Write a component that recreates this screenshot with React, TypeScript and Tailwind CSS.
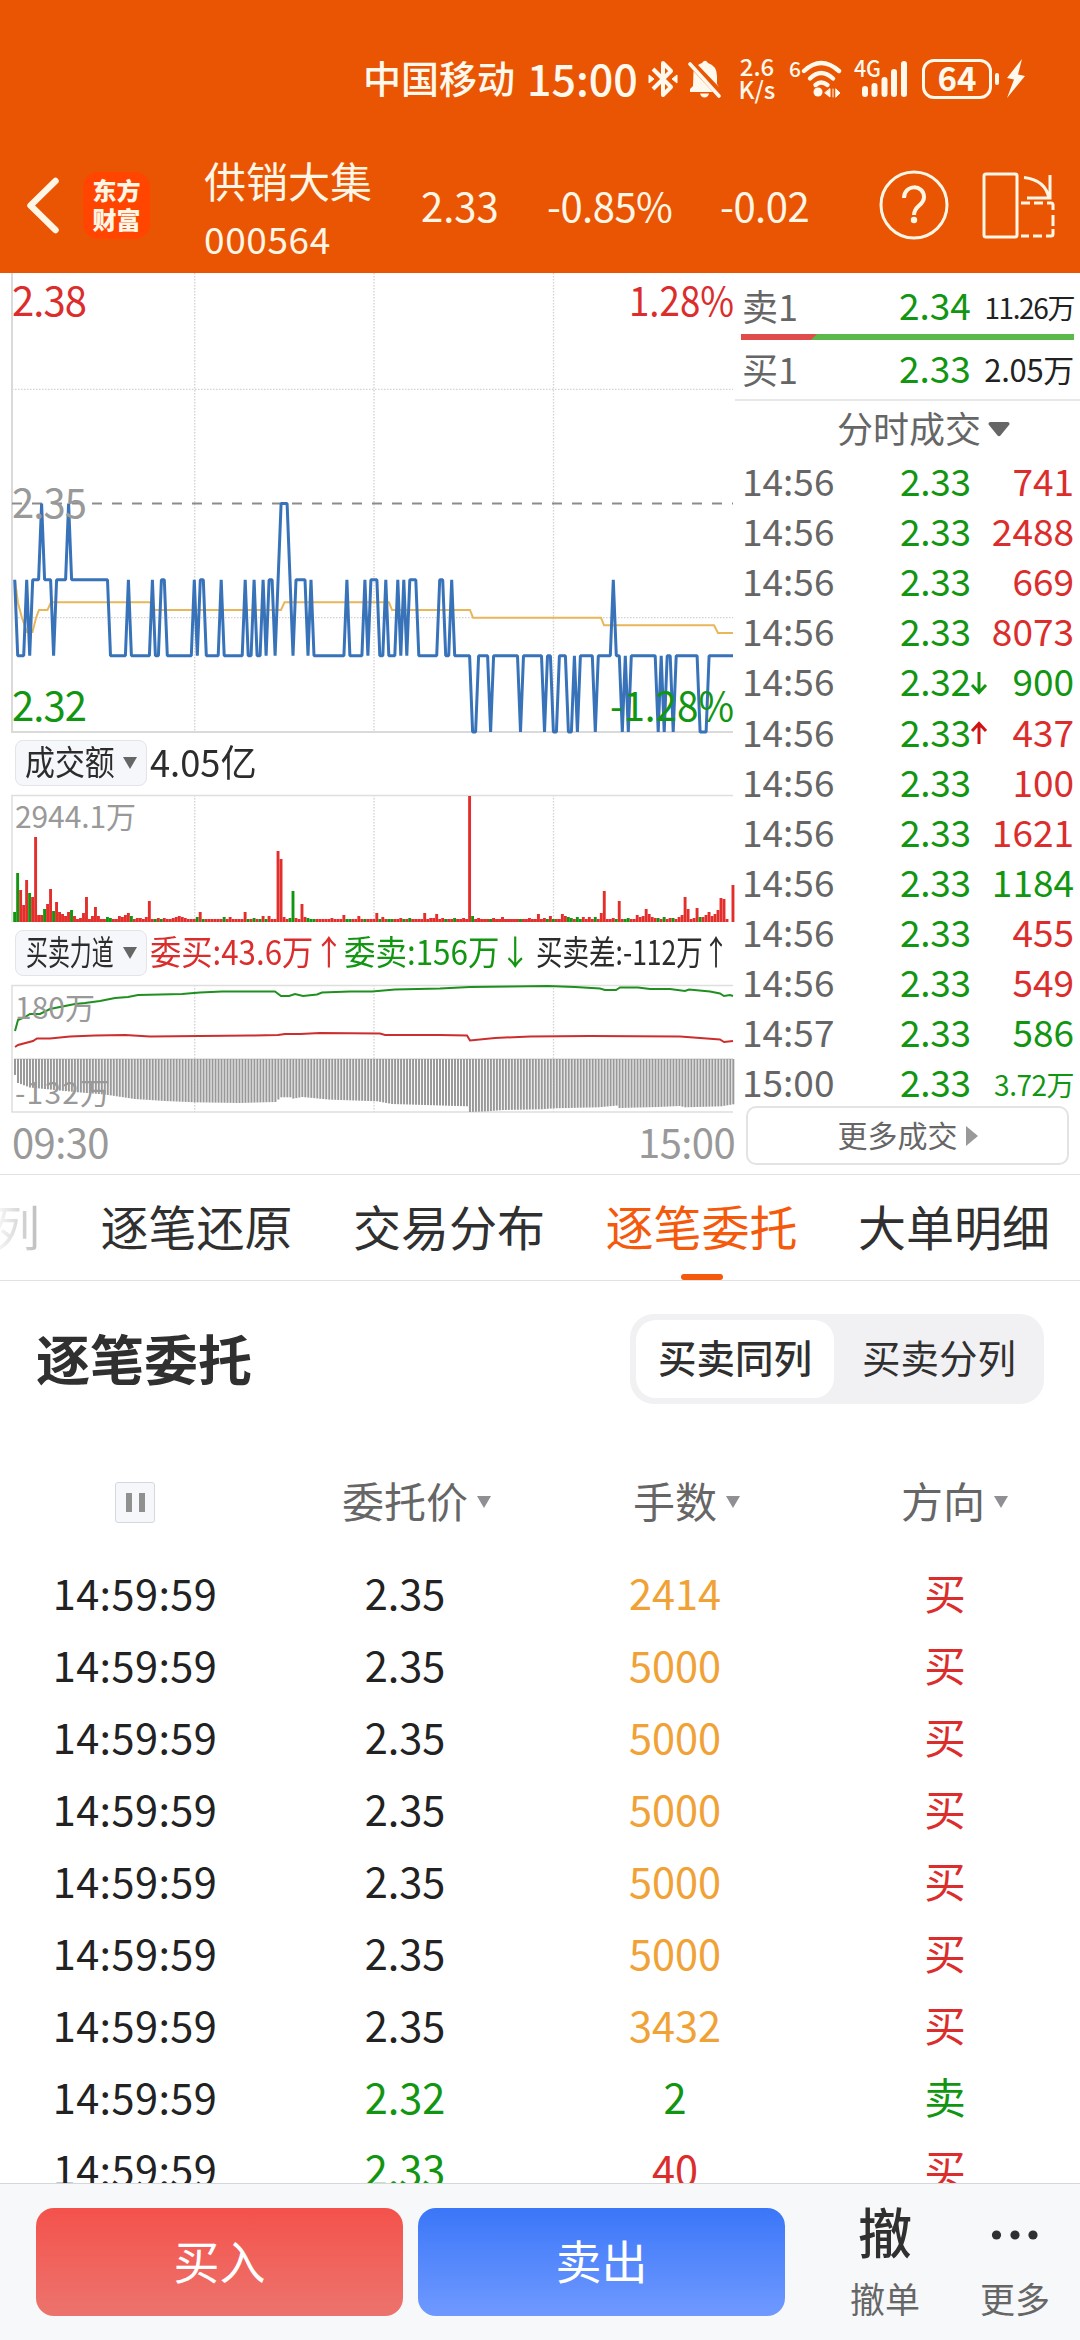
import React from 'react';

const FONT = "font-['Noto_Sans_CJK_SC','Noto_Sans',sans-serif]";

const RED = '#dc2d2d';
const GREEN = '#129612';
const GRAY = '#999999';

// Minute index -> x inside the chart area
const minuteX = (i: number) => 14.7 + i * 2.993;

/* ---------- Chart data ---------- */

// Corners of the price line, "minute + level" (T 2.35, A 2.34, B 2.33, L 2.32)
const PRICE_POINTS =
  '0A 1B 3B 4A 5B 6A 8A 9T 10A 12A 13B 14A 17A 18T 19A 31A 32B 37B 38A 39B 45B 46A 47B 48B 49A 50A 51B 59B 60A 61B 62A 63A 64B 68B 69A 70B 76B 77A 78B 79B 80A 81B 82B 83A 84B 85A 86A 87B 89T 91T 93B 94A 97A 98B 99A 100B 110B 111A 112B 116B 117A 118B 119A 121A 122B 123B 124A 125B 127B 128A 129B 130A 131B 132A 134A 135B 141B 142A 143A 144B 145B 146A 147B 152B 153L 154L 155B 158B 159L 160B 168B 169L 170B 176B 177L 178B 179B 180L 181L 182B 184B 185L 186L 187B 188L 189B 193B 194L 195B 199B 200A 201B 202B 203L 204B 205L 206B 214B 215L 216B 217L 218B 219B 220L 221B 228B 229L 231L 232B 240B';

const LEVEL_Y: Record<string, number> = { T: 230.5, A: 306.7, B: 382.7, L: 459 };

const pricePath = PRICE_POINTS.split(' ')
  .map((p) => `${minuteX(parseInt(p, 10)).toFixed(1)},${LEVEL_Y[p.slice(-1)]}`)
  .join(' ');

// Turnover bars that rise above the base height, g = falling minute
const VOLUME_BARS =
  '0:10g 1:49g 2:32 3:17 4:42 5:29g 6:25 7:85 8:7 9:7 10:13g 11:18 12:33 13:11g 14:20 15:10 16:8 17:6 18:10 19:12g 20:6 22:4 23:9 24:25 26:6 27:15 28:6 31:5g 32:4g 35:6 36:5 37:7 38:9 39:6g 41:4 42:4 44:5 45:21 47:3g 48:4 49:3g 50:4 53:4 54:5 55:6 56:5 57:4 61:5g 62:10 63:3g 70:5g 72:5 77:10 78:3g 80:4g 82:3g 83:6 84:3g 85:6 88:71 89:63 90:5 92:4g 93:31g 94:4 96:18 97:5 98:4g 99:3g 100:3g 106:4 110:7 111:3g 112:3g 115:6 117:3g 121:9 122:3g 123:5 125:3g 126:3g 129:4 130:3g 132:4g 137:9 139:4 140:4 141:8 143:4 144:3g 147:4g 150:4 152:126 153:6g 155:4 159:3g 160:4 163:5 169:3g 172:4 175:8 177:4 178:3g 179:6 180:3g 183:8 184:6 185:5g 186:4g 188:5g 189:3g 190:5 192:5 194:5g 196:9 197:31 200:4 201:3g 202:21 204:3g 205:4g 208:7 209:5 210:6 211:13 212:8 213:5 214:4 215:4g 217:5g 219:4 220:4g 222:5 223:7 224:25 225:13 227:4 228:14 229:5g 230:5 231:7 232:10 233:6 234:8 235:12 236:24 237:23 240:37';

const volumeBars = Array.from({ length: 241 }, (_, i) => ({ i, h: i === 239 ? 0 : 3, color: '#e22f2c' }));
VOLUME_BARS.split(' ').forEach((entry) => {
  const [i, h] = entry.split(':');
  volumeBars[Number(i)] = { i: Number(i), h: parseInt(h, 10), color: h.endsWith('g') ? GREEN : '#e22f2c' };
});

// Buy/sell difference, [minute, bar length]
const DIFF_STOPS = [
  [0, 16], [1, 24], [5, 28.5], [20, 33], [30, 35.5], [40, 40], [50, 42], [60, 43.3], [75, 44], [87, 43], [88, 40.5],
  [89, 38.3], [92, 38.3], [93, 39.6], [96, 38], [105, 40.6], [121, 42.3], [126, 45], [151, 47.3], [152, 53], [158, 52.3],
  [163, 51], [176, 50.3], [180, 49.3], [195, 48.3], [201, 46.6], [202, 49], [215, 48], [222, 47], [224, 48.3], [236, 47.3], [240, 45.3],
];

const diffAt = (i: number) => {
  const k = Math.max(1, DIFF_STOPS.findIndex(([m]) => m >= i));
  const [m0, v0] = DIFF_STOPS[k - 1];
  const [m1, v1] = DIFF_STOPS[k];
  return v0 + ((v1 - v0) * (i - m0)) / (m1 - m0);
};

const GRID_X = [194.7, 374, 553.5];

/* ---------- Table data ---------- */

type Tick = { time: string; price: string; amount: string; sell?: boolean; move?: 'up' | 'down' };

const TICKS: Tick[] = [
  { time: '14:56', price: '2.33', amount: '741' },
  { time: '14:56', price: '2.33', amount: '2488' },
  { time: '14:56', price: '2.33', amount: '669' },
  { time: '14:56', price: '2.33', amount: '8073' },
  { time: '14:56', price: '2.32', amount: '900', sell: true, move: 'down' },
  { time: '14:56', price: '2.33', amount: '437', move: 'up' },
  { time: '14:56', price: '2.33', amount: '100' },
  { time: '14:56', price: '2.33', amount: '1621' },
  { time: '14:56', price: '2.33', amount: '1184', sell: true },
  { time: '14:56', price: '2.33', amount: '455' },
  { time: '14:56', price: '2.33', amount: '549' },
  { time: '14:57', price: '2.33', amount: '586', sell: true },
  { time: '15:00', price: '2.33', amount: '3.72万', sell: true },
];

const ORDERS = [
  { price: '2.35', lots: '2414', side: '买' },
  { price: '2.35', lots: '5000', side: '买' },
  { price: '2.35', lots: '5000', side: '买' },
  { price: '2.35', lots: '5000', side: '买' },
  { price: '2.35', lots: '5000', side: '买' },
  { price: '2.35', lots: '5000', side: '买' },
  { price: '2.35', lots: '3432', side: '买' },
  { price: '2.32', lots: '2', side: '卖' },
  { price: '2.33', lots: '40', side: '买' },
];

/* ---------- Header ---------- */

const StatusBar = () => (
  <div className="h-[140px] pt-[55px] pl-[363px] flex items-start text-[#fff8ec] font-medium">
    <span className="text-[38px] leading-[44px] w-[164px] whitespace-nowrap">中国移动</span>
    <span className="text-[43px] leading-[46px] w-[121px] -mt-[1px]">15:00</span>

    <svg width="30" height="40" viewBox="0 0 30 40" className="mt-[4px]" fill="none" stroke="currentColor" strokeWidth="4" strokeLinejoin="round">
      <path d="M5 10 L23 28 L15 36 V4 L23 12 L5 30" />
      <path d="M1 16 l5 4 l-5 4 Z M29 16 l-5 4 l5 4 Z" fill="currentColor" strokeWidth="1" />
    </svg>
    <svg width="34" height="40" viewBox="0 0 34 40" className="mt-[4px] ml-[10px]" fill="currentColor">
      <path d="M10 6 Q12.500 4.500 14 4 Q17 -0.500 20 4 Q29 7 29 17 V25 L31 28 Z" />
      <path d="M5.500 12 L25 33 H2 V30 L5 27 Z" />
      <path d="M12 34.500 H21 Q20 38.500 16.500 38.500 Q13 38.500 12 34.500 Z" />
      <path d="M2 5 L31 37" stroke="currentColor" strokeWidth="3.6" strokeLinecap="round" />
    </svg>

    <div className="w-[42px] ml-[14px] -mt-[1px] text-center text-[24px] leading-[23px]">
      <div>2.6</div>
      <div>K/s</div>
    </div>

    <span className="ml-[11px] w-[12px] text-[21px] leading-[22px] mt-[2px]">6</span>
    <svg width="42" height="40" viewBox="0 0 42 40" className="mt-[4px]" fill="none" stroke="currentColor" strokeWidth="4.4" strokeLinecap="round">
      <path d="M3 12 Q20 -4 38 12" />
      <path d="M9 19.500 Q20 8.500 32 19.500" />
      <path d="M14.500 26 Q20 21 26.500 26" />
      <circle cx="17" cy="33" r="4.500" fill="currentColor" stroke="none" />
      <path d="M29 30 V38 L24 34 Z M32 30 V38 M35 30 L39 34 L35 38 Z" fill="currentColor" strokeWidth="1" />
    </svg>

    <svg width="54" height="42" viewBox="0 0 54 42" className="ml-[11px] mt-[3px]" stroke="currentColor" strokeWidth="6" strokeLinecap="round">
      <text x="0" y="19" fontSize="23" fill="currentColor" stroke="none" textLength="27" lengthAdjust="spacingAndGlyphs">4G</text>
      <path d="M11 31 V36 M20.500 28 V36 M30.500 22 V36 M40 14 V36 M50 6 V36" />
    </svg>

    <div className="ml-[14px] mt-[4px] w-[70px] h-[40px] rounded-[12px] border-[3px] border-current text-[33px] leading-[30px] text-center font-bold">64</div>
    <div className="ml-[3px] mt-[18px] w-[4px] h-[12px] rounded-full bg-current" />
    <svg width="22" height="40" viewBox="0 0 22 40" className="ml-[6px] mt-[4px]" fill="currentColor">
      <path d="M17 0 L2 19 L9 20.500 L2 39 L20 17 L13 15.500 Z" />
    </svg>
  </div>
);

const TitleBar = () => (
  <div className="h-[133px] flex items-start text-[#fff6e6]">
    <svg width="83" height="133" viewBox="0 0 83 133" fill="none" stroke="currentColor" strokeWidth="6.500" strokeLinecap="round" strokeLinejoin="round">
      <path d="M55.500 41 L30.500 65.500 L55.500 90" />
    </svg>
    <div className="mt-[32px] w-[67px] h-[67px] rounded-[15px] bg-[#ff4500] flex flex-col items-center justify-center text-[24px] leading-[29px] font-black pb-[3px]">
      <span>东方</span>
      <span>财富</span>
    </div>
    <div className="ml-[54px] w-[217px] mt-[13px]">
      <div className="text-[42px] leading-[54px] whitespace-nowrap">供销大集</div>
      <div className="text-[37px] leading-[62px] tracking-[0.600px]">000564</div>
    </div>
    <div className="mt-[37px] flex text-[40px] leading-[56px] whitespace-nowrap tracking-[-0.500px]">
      <span className="w-[126px] tracking-normal">2.33</span>
      <span className="w-[173px]">-0.85%</span>
      <span className="w-[159px]">-0.02</span>
    </div>
    <svg width="70" height="70" viewBox="0 0 70 70" className="mt-[30px]" fill="none" stroke="currentColor" strokeWidth="3">
      <circle cx="35" cy="35" r="33" />
      <path d="M25 28 C25 14 45 14 45 27 C45 36 35 35 35 45" strokeWidth="4" />
      <circle cx="35" cy="50" r="3.200" fill="currentColor" stroke="none" />
    </svg>
    <svg width="74" height="70" viewBox="0 0 74 70" className="ml-[32px] mt-[31px]" fill="none" stroke="currentColor" strokeWidth="3">
      <rect x="3" y="3" width="33" height="63" rx="2" />
      <path d="M43 6.500 Q65 9 68 28 M69 4 V27 H46" />
      <path d="M40 32 H49 M53 32 H62 M66 32 H70 Q72 32 72 34 V39 M72 44 V55 M72 58 V63 Q72 65 70 65 H65 M61 65 H52 M48 65 H40" />
    </svg>
  </div>
);

/* ---------- Charts ---------- */

const PriceChart = () => (
  <svg width="735" height="462" viewBox="0 0 735 462" className="block text-[40px]">
    <g fill="none" strokeWidth="1.300" stroke="#d2d2d2" strokeDasharray="1.500 1.500">
      {GRID_X.map((x) => <path key={x} d={`M${x} 0 V459`} />)}
      <path d="M12 116.300 H733 M12 344.700 H733" />
    </g>
    <path d="M12 0 V459 H733" fill="none" stroke="#dadada" strokeWidth="2" />
    <path d="M12 230.500 H733" stroke="#8c8c8c" strokeWidth="2" strokeDasharray="10 10" />
    <polyline
      fill="none"
      stroke="#e8b75a"
      strokeWidth="2"
      points="15,307 18,330 22,345 27,359 32.500,359 36,345 39,337 47.500,337 51,329.300 150,329.300 155,337 281,337 284.500,329.300 389,329.300 392,337 470,337 473,344.700 601,344.700 604,352.300 714,352.300 718,360 733,360"
    />
    <polyline fill="none" stroke="#3873b9" strokeWidth="3" strokeLinejoin="bevel" points={pricePath} />
    <text x="12" y="43" fill={RED} textLength="75">2.38</text>
    <text x="12" y="245" fill={GRAY} textLength="75">2.35</text>
    <text x="12" y="448" fill={GREEN} textLength="75">2.32</text>
    <text x="629" y="43" fill={RED} textLength="105" lengthAdjust="spacingAndGlyphs">1.28%</text>
    <text x="610" y="448" fill={GREEN} textLength="124" lengthAdjust="spacingAndGlyphs">-1.28%</text>
  </svg>
);

const VolumeChart = () => (
  <svg width="735" height="130" viewBox="0 0 735 130" className="block">
    {GRID_X.map((x) => <path key={x} d={`M${x} 1 V128`} stroke="#d2d2d2" strokeWidth="1.300" strokeDasharray="1.500 1.500" />)}
    <path d="M12 128 V1.500 H733" fill="none" stroke="#dedede" strokeWidth="1.500" />
    {volumeBars.map(({ i, h, color }) => (
      <rect key={i} x={minuteX(i) - 1.5} y={128 - h} width="2.900" height={h} fill={color} />
    ))}
    <text x="15" y="34" fontSize="30" fill={GRAY} textLength="121">2944.1万</text>
  </svg>
);

const ForceChart = () => (
  <svg width="735" height="130" viewBox="0 0 735 130" className="block">
    {GRID_X.map((x) => <path key={x} d={`M${x} 1 V128`} stroke="#d2d2d2" strokeWidth="1.300" strokeDasharray="1.500 1.500" />)}
    <path d="M733 1.500 H12 V128 H733" fill="none" stroke="#dedede" strokeWidth="1.500" />
    <path d="M14 75 H733" stroke="#c9c9c9" strokeWidth="1" />
    {volumeBars.map(({ i }) => (
      <rect key={i} x={minuteX(i) - 0.7} y="75" width="2" height={diffAt(i)} fill="#999999" />
    ))}
    <polyline
      fill="none"
      stroke="#1f8f1f"
      strokeWidth="2"
      points="15,47 18,36 25,33 30,30 40,30 50,25 75,20 85,19 100,17 115,14 128,13 138,11 160,10.500 182,10 200,8.500 222,7.500 275,7.500 281,12 289,12 295,10 303,12 317,10.500 322,8.500 350,7.500 372,7.500 395,5.500 440,4.500 470,3 510,2.500 548,2 575,3 600,4.500 605,6 616,6 620,3.500 638,3.500 650,5 670,5 685,7 689,5.500 710,7.500 720,9.500 724,12 730,11 733,12"
    />
    <polyline
      fill="none"
      stroke="#cc2e2e"
      strokeWidth="2"
      points="15,63 18,61 33,57 37,54.500 50,54.500 70,52.500 95,51.500 125,51 150,52.500 200,52 250,51.500 278,51 285,50 300,50 320,49 380,49.500 385,51 440,51 467,51.500 470,56.500 495,54 530,52.500 590,52 680,52.500 720,55.500 724,58 733,57"
    />
    <text x="15" y="34.500" fontSize="30" fill={GRAY} textLength="80">180万</text>
    <text x="15" y="120" fontSize="30" fill={GRAY} textLength="95">-132万</text>
  </svg>
);

const CaretDown = ({ className }: { className?: string }) => (
  <svg viewBox="0 0 14 12" className={className} fill="currentColor">
    <path d="M0 0 H14 L7 12 Z" />
  </svg>
);

const Charts = () => (
  <div className="w-[735px] shrink-0 text-[#2c2c2c]">
    <PriceChart />

    <div className="h-[59px] pt-[5px] pl-[15px] flex">
      <button className="w-[132px] h-[46px] pl-[9px] rounded-[8px] border border-[#e3e4e8] bg-[#f6f7fa] flex items-center">
        <span className="w-[98px] text-left whitespace-nowrap text-[34px] leading-[40px] pb-[4px] origin-left scale-x-[0.880]">成交额</span>
        <CaretDown className="w-[14px] h-[12px] text-[#666]" />
      </button>
      <span className="ml-[3px] text-[37px] leading-[42px] whitespace-nowrap origin-left scale-x-[0.980]">4.05亿</span>
    </div>

    <VolumeChart />

    <div className="h-[60px] pt-[6px] pl-[15px] flex text-[34px] leading-[42px] whitespace-nowrap">
      <button className="w-[132px] h-[46px] pl-[10px] rounded-[8px] border border-[#e3e4e8] bg-[#f6f7fa] flex items-center">
        <span className="w-[97px] text-left leading-[40px] pb-[4px] origin-left scale-x-[0.645]">买卖力道</span>
        <CaretDown className="w-[14px] h-[12px] text-[#666]" />
      </button>
      <span className="w-[194px] ml-[3px] text-[#dc2d2d] origin-left scale-x-[0.920]">委买:43.6万↑</span>
      <span className="w-[192px] text-[#129612] origin-left scale-x-[0.925]">委卖:156万↓</span>
      <span className="w-[192px] origin-left scale-x-[0.780]">买卖差:-112万↑</span>
    </div>

    <ForceChart />

    <div className="h-[60px] pl-[12px] flex justify-between text-[40px] leading-[54px] tracking-[-0.600px] text-[#999]">
      <span>09:30</span>
      <span>15:00</span>
    </div>
  </div>
);

/* ---------- Quote column ---------- */

const MoveArrow = ({ up }: { up: boolean }) => (
  <svg width="18" height="26" viewBox="0 0 18 26" fill="none" stroke={up ? '#d01212' : GREEN} strokeWidth="3" className="mt-[4px]">
    <path d={up ? 'M9 24 V3 M2 11 L9 3.500 L16 11' : 'M9 2 V23 M2 15 L9 22.500 L16 15'} />
  </svg>
);

const Quotes = () => (
  <div className="flex-1 text-[37px]">
    <div className="h-[61px] pl-[7px] pr-[6px] flex items-center pt-[2px]">
      <span className="w-[157px] text-[#666] text-[36px]">卖1</span>
      <span className="text-[#129612]">2.34</span>
      <span className="ml-auto text-[28px] pt-[5px] tracking-[-1.400px] text-[#222]">11.26万</span>
    </div>
    <div className="ml-[6px] h-[6px] w-[333px] flex bg-[#5cb84a]">
      <div className="w-[76px] bg-[#e04b4b] [clip-path:polygon(0_0,100%_0,92%_100%,0_100%)]" />
    </div>
    <div className="h-[59px] pl-[7px] pr-[6px] pb-[3px] flex items-center">
      <span className="w-[157px] text-[#666] text-[36px]">买1</span>
      <span className="text-[#129612]">2.33</span>
      <span className="ml-auto text-[31px] pt-[3px] tracking-[-0.300px] text-[#222]">2.05万</span>
    </div>
    <div className="h-[2px] bg-[#e8e8e8]" />

    <div className="h-[57px] pl-[102px] flex items-center text-[36px] text-[#666]">
      <span className="pb-[5px]">分时成交</span>
      <svg width="22" height="15" viewBox="0 0 22 15" className="ml-[7px]" fill="currentColor">
        <path d="M2 0 H20 Q22.500 1 21 3 L12.500 13.500 Q11 15 9.500 13.500 L1 3 Q-0.500 1 2 0 Z" />
      </svg>
    </div>

    {TICKS.map((t, i) => (
      <div key={i} className="h-[50.100px] pl-[7px] pr-[6px] pb-[5px] flex items-center leading-[45px]">
        <span className="w-[158px] text-[#666]">{t.time}</span>
        <span className="w-[70px] text-[#129612] tracking-[-0.300px]">{t.price}</span>
        <span className="w-[18px]">{t.move && <MoveArrow up={t.move === 'up'} />}</span>
        <span className={`ml-auto ${t.sell ? 'text-[#129612]' : 'text-[#dc2d2d]'} ${t.amount.includes('万') ? 'text-[28px] pt-[6px] tracking-[-0.500px]' : ''}`}>
          {t.amount}
        </span>
      </div>
    ))}

    <button className="ml-[11px] mt-[-3px] w-[323px] h-[59px] rounded-[10px] border-2 border-[#e3e3e3] bg-white flex items-center justify-center text-[30px] text-[#666] relative">
      <span className="pb-[3px]">更多成交</span>
      <svg width="12" height="20" viewBox="0 0 12 20" className="ml-[8px]" fill="#999">
        <path d="M0 0 L12 10 L0 20 Z" />
      </svg>
    </button>
  </div>
);

/* ---------- Order list ---------- */

const Tabs = () => (
  <div className="h-[107px] border-y border-[#e2e2e2] flex gap-[60.500px] text-[48px] leading-[100px] whitespace-nowrap text-[#303030] overflow-hidden">
    <span className="-ml-[8px] bg-gradient-to-r from-white to-[#bbb] bg-clip-text text-transparent">列</span>
    <span>逐笔还原</span>
    <span>交易分布</span>
    <span className="relative text-[#f4590c]">
      逐笔委托
      <i className="absolute left-[75px] bottom-0 w-[42px] h-[6px] rounded-full bg-[#f4590c]" />
    </span>
    <span>大单明细</span>
  </div>
);

const HEADERS = ['委托价', '手数', '方向'];

const OrderList = () => (
  <div className="h-[902px] overflow-hidden">
    <div className="h-[168px] pl-[36px] pr-[36px] pt-[33px] flex justify-between">
      <h2 className="text-[54px] leading-[88px] font-bold text-[#303030]">逐笔委托</h2>
      <div className="w-[414px] h-[90px] p-[6px] rounded-[24px] bg-[#f1f1f4] flex text-[38.500px] leading-[73px] text-center text-[#303030]">
        <span className="w-[198px] h-[78px] rounded-[20px] bg-white font-medium">买卖同列</span>
        <span className="flex-1 pl-[6px]">买卖分列</span>
      </div>
    </div>

    <div className="h-[107px] grid grid-cols-4 items-center text-[42px] leading-[60px] text-[#666]">
      <div className="mx-auto w-[40px] h-[41px] rounded-[3px] border border-[#d5d9de] bg-[#f5f7fa] flex items-center justify-center gap-[7px]">
        <i className="w-[6px] h-[19px] bg-[#909090]" />
        <i className="w-[6px] h-[19px] bg-[#909090]" />
      </div>
      {HEADERS.map((h) => (
        <div key={h} className="flex justify-center last:pr-[4px]">
          <span className="relative pb-[6px]">
            {h}
            <CaretDown className="absolute left-full ml-[7px] top-[26px] w-[18px] h-[12px] text-[#8f8f94]" />
          </span>
        </div>
      ))}
    </div>

    <div className="pt-[3px]">
      {ORDERS.map((o, i) => {
        const sell = o.side === '卖';
        const big = o.lots.length > 3;
        return (
          <div key={i} className="h-[72px] grid grid-cols-4 text-center text-[41.500px] leading-[67px] text-[#222]">
            <span className="tracking-[0.400px]">14:59:59</span>
            <span className={o.price === '2.35' ? '' : 'text-[#129612]'}>{o.price}</span>
            <span className={big ? 'text-[#f0a236]' : sell ? 'text-[#129612]' : 'text-[#dc2d2d]'}>{o.lots}</span>
            <span className={sell ? 'text-[#129612]' : 'text-[#dc2d2d]'}>{o.side}</span>
          </div>
        );
      })}
    </div>
  </div>
);

const BottomBar = () => (
  <div className="h-[157px] border-t border-[#d6d7da] bg-[#f7f8fa] pt-[24px] pl-[36px] flex text-white">
    <button className="w-[367px] h-[108px] pb-[6px] rounded-[18px] bg-gradient-to-b from-[#f4514b] to-[#ec736d] text-[46px] leading-[100px]">买入</button>
    <button className="ml-[15px] w-[367px] h-[108px] pb-[6px] rounded-[18px] bg-gradient-to-b from-[#3a76f8] to-[#6f99ff] text-[46px] leading-[100px]">卖出</button>
    <div className="ml-[35px] w-[130px] text-center text-[35px] text-[#666]">
      <div className="text-[54px] leading-[46px] font-medium text-[#303030]">撤</div>
      <div className="mt-[16px] leading-[56px]">撤单</div>
    </div>
    <div className="w-[130px] text-center text-[35px] text-[#666]">
      <svg width="130" height="46" viewBox="0 0 130 46" fill="#303030" className="block">
        <circle cx="46.500" cy="27" r="4.600" />
        <circle cx="65" cy="27" r="4.600" />
        <circle cx="83" cy="27" r="4.600" />
      </svg>
      <div className="mt-[16px] leading-[56px]">更多</div>
    </div>
  </div>
);

const App: React.FC = () => {
  return (
    <div className={`w-[1080px] h-[2340px] overflow-hidden bg-white ${FONT}`}>
      <header className="h-[273px] bg-[#e95503]">
        <StatusBar />
        <TitleBar />
      </header>
      <main>
        <section className="h-[901px] flex">
          <Charts />
          <Quotes />
        </section>
        <Tabs />
        <OrderList />
      </main>
      <BottomBar />
    </div>
  );
};

export default App;
